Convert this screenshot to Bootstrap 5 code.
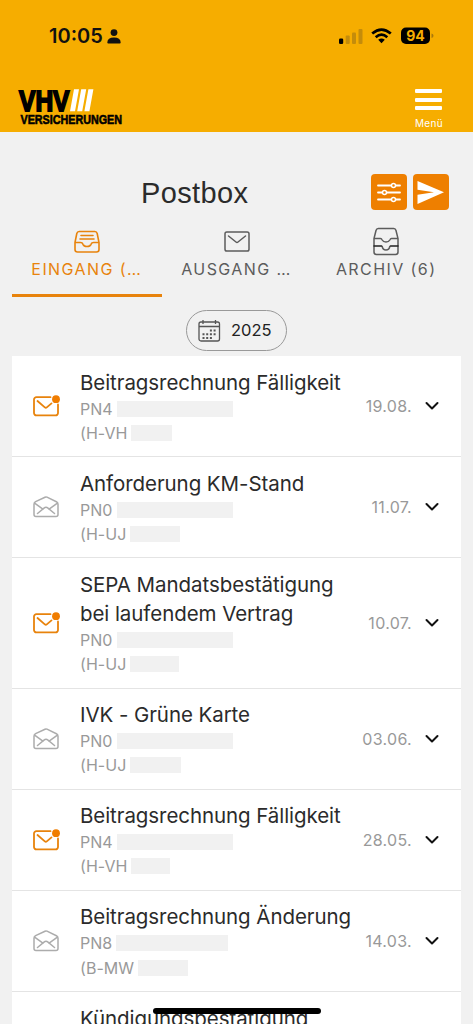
<!DOCTYPE html>
<html lang="de">
<head>
  <meta charset="UTF-8" />
  <meta name="viewport" content="width=device-width, initial-scale=1" />
  <title>Postbox</title>
  <link href="https://cdn.jsdelivr.net/npm/bootstrap@5.3.0/dist/css/bootstrap.min.css" rel="stylesheet" />
  <style>
    body { font-family: Inter, "Liberation Sans", sans-serif; background: #f1f1f1; color: #2b2b2b; height: 1024px; overflow: hidden; }
    svg { display: block; fill: none; flex: none; }
    .top { background: #f6ad00; height: 132px; }
    .status { height: 72px; padding: 0 39px 0 49px; color: #111; }
    .clock { font-size: 20px; font-weight: 600; letter-spacing: 0; line-height: 24px; }
    .brand-row { height: 60px; padding: 14px 30px 0 18px; }
    .menu-label { font-size: 10px; line-height: 12px; letter-spacing: .35px; margin-top: 7px; }
    .menu-bars { width: 27px; height: 21px; margin-top: 3px; }
    .menu-bars span { height: 4px; border-radius: 1px; background: #fff; }
    .title-row { height: 87px; padding: 42px 24px 0 141px; }
    .page-title { font-family: "Liberation Sans", sans-serif; font-size: 29px; font-weight: 400; line-height: 36px; letter-spacing: .35px; margin-top: 1px; }
    .tools { gap: 6px; }
    .tool { width: 36px; height: 36px; border-radius: 4px; background: #ee7f00; }
    .tabs { height: 78px; margin: 0 12px; color: #5c5c5c; }
    .tab { flex: 1 1 0; border-bottom: 3px solid transparent; padding-top: 8px; }
    .tab.on { color: #e8830c; border-color: #e8830c; }
    .tab-text { font-size: 16px; letter-spacing: 1.42px; line-height: 22px; margin-top: 2px; white-space: nowrap; }
    .year-row { height: 59px; padding-top: 13px; }
    .year { width: 101px; height: 41px; border: 1px solid #999; border-radius: 21px; font-size: 16.5px; color: #222; padding-left: 11px; gap: 10px; }
    .mails { margin: 0 12px; background: #fff; }
    .mail { border-bottom: 1px solid #e4e4e4; padding: 11.500px 22px 11.500px 21px; }
    .mail-body { margin-left: 20px; }
    .mail-title { font-size: 20.5px; line-height: 29px; letter-spacing: -.07px; white-space: nowrap; }
    .sub { font-size: 16px; line-height: 24.1px; height: 24.1px; color: #999; letter-spacing: .05px; gap: 4px; }
    .mask { height: 16px; background: #f1f1f1; }
    .date { font-size: 16px; color: #999; letter-spacing: .3px; margin-right: 13px; }
    .home-bar { position: absolute; left: 153px; top: 1008px; width: 168px; height: 6px; border-radius: 3px; background: #000; }
  </style>
</head>
<body>
  <svg width="0" height="0" class="position-absolute">
    <symbol id="mail-new" viewBox="0 0 27 22">
      <path d="M17.500 2.200H3.500A2.400 2.400 0 0 0 1 4.600V18a2.400 2.400 0 0 0 2.500 2.400H22.500A2.400 2.400 0 0 0 25 18V9.500M4.500 6l7.300 6.400q1 .8 2 0l4.700-4" stroke="#e8830c" stroke-width="1.800" stroke-linecap="round" />
      <circle cx="23" cy="4.200" r="3.900" fill="#f07d00" />
    </symbol>
    <symbol id="mail-open" viewBox="0 0 27 22">
      <path d="M1 8.200Q1 6.500 2.600 5.700L12 1.200q1-.5 2 0l9.400 4.500Q25 6.500 25 8.200V18.500a2 2 0 0 1-2 2H3a2 2 0 0 1-2-2ZM1.600 7.200l8.300 6M24.400 7.200l-8.300 6M4.500 17.500l6.500-5.400q2-1.600 4 0l6.500 5.400" stroke="#acacac" stroke-width="1.500" stroke-linecap="round" />
    </symbol>
    <symbol id="chevron" viewBox="0 0 14 10"><path d="M1.500 2l5.500 5.500L12.500 2" stroke="#111" stroke-width="2" stroke-linecap="round" stroke-linejoin="round" /></symbol>
  </svg>

  <header class="top">
    <div class="status d-flex align-items-center">
      <span class="clock">10:05</span>
      <svg class="ms-1" width="14" height="15" viewBox="0 0 14 15"><g fill="#111"><circle cx="7" cy="3.600" r="3.400" /><path d="M.3 13.500Q.5 8.500 7 8.500t6.700 5q0 1-1 1H1.300q-1 0-1-1Z" /></g></svg>
      <svg class="ms-auto" width="24" height="16" viewBox="0 0 24 16">
        <rect x="0" y="10.500" width="4.200" height="5.500" rx="1.200" fill="#000" />
        <g fill="#c48c0b"><rect x="6.700" y="7.500" width="4" height="8.500" rx="1" /><rect x="13" y="4.500" width="4" height="11.500" rx="1" /><rect x="19.500" y="1" width="4" height="15" rx="1" /></g>
      </svg>
      <svg width="21" height="16" viewBox="0 0 21 16" class="ms-2">
        <path d="M1.200 5.600q9.300-8 18.600 0M4.700 9.200q5.800-5 11.600 0" stroke="#000" stroke-width="2.700" />
        <path d="M7.200 11.800q3.300-2.600 6.600 0L10.500 15.300Z" fill="#000" />
      </svg>
      <svg width="34" height="18" viewBox="0 0 34 18" class="ms-2">
        <rect x="1" y=".5" width="29" height="16.500" rx="5" fill="#000" />
        <path d="M31.500 6.500q2 .4 2 2.200t-2 2.200Z" fill="#a9790c" />
        <text x="15.500" y="13.800" text-anchor="middle" font-family="Inter, sans-serif" font-size="14" font-weight="700" fill="#f6ad00">94</text>
      </svg>
    </div>
    <div class="brand-row d-flex justify-content-between">
      <svg width="106" height="44" viewBox="0 0 106 44" overflow="visible">
        <g font-family="Liberation Sans, Arial, sans-serif" font-weight="700" fill="#000" stroke="#000">
          <text x="1" y="24.800" font-size="29.500" stroke-width="1.900" textLength="50.500" lengthAdjust="spacingAndGlyphs">VHV</text>
          <text x="2.500" y="37.700" font-size="13.500" stroke-width=".6" textLength="101.500" lengthAdjust="spacingAndGlyphs">VERSICHERUNGEN</text>
        </g>
        <path d="M56 3.300h5l-4 22h-5ZM63.200 3.300h5l-4 22h-5ZM70.400 3.300h5l-4 22h-5Z" fill="#fff" />
      </svg>
      <div class="d-flex flex-column align-items-center text-white">
        <div class="menu-bars d-flex flex-column justify-content-between"><span></span><span></span><span></span></div>
        <div class="menu-label">Menü</div>
      </div>
    </div>
  </header>

  <div class="title-row d-flex justify-content-between">
    <h1 class="page-title mb-0">Postbox</h1>
    <div class="tools d-flex">
      <div class="tool"><svg width="36" height="36" viewBox="0 0 36 36">
        <path d="M7 11.500h22M7 18.500h22M7 25.500h22" stroke="#fff" stroke-width="1.800" stroke-linecap="round" />
        <g fill="#ee7f00" stroke="#fff" stroke-width="1.500"><circle cx="22.500" cy="11.500" r="2" /><circle cx="13.500" cy="18.500" r="2" /><circle cx="22.500" cy="25.500" r="2" /></g>
      </svg></div>
      <div class="tool"><svg width="36" height="36" viewBox="0 0 36 36"><path d="M4.500 7L31 18.300 4.500 30V20.800L21 18.300 4.500 15.800Z" fill="#fff" /></svg></div>
    </div>
  </div>

  <nav class="tabs d-flex text-center">
    <div class="tab on d-flex flex-column align-items-center">
      <svg width="26" height="29" viewBox="0 0 26 29" stroke="currentColor" stroke-width="1.600" stroke-linecap="round">
        <path d="M1 15.500L2.800 6.500Q3.300 4.500 5.200 4.500H20.800Q22.700 4.500 23.200 6.500L25 15.500V22.500Q25 25 22.500 25H3.500Q1 25 1 22.500ZM1 15.500H6.500Q8.300 15.500 9 17.300 10 19.500 13 19.500T17 17.300Q17.700 15.500 19.500 15.500H25M7 8.500h12M6 12h14" />
      </svg>
      <div class="tab-text">EINGANG (…</div>
    </div>
    <div class="tab d-flex flex-column align-items-center">
      <svg width="26" height="29" viewBox="0 0 26 29" stroke="currentColor" stroke-width="1.500" stroke-linecap="round">
        <rect x="1" y="5" width="24" height="19" rx="1.800" /><path d="M4.500 9l7.500 6q1 .8 2 0l7.500-6" />
      </svg>
      <div class="tab-text">AUSGANG …</div>
    </div>
    <div class="tab d-flex flex-column align-items-center">
      <svg width="26" height="29" viewBox="0 0 26 29" stroke="currentColor" stroke-width="1.500" stroke-linecap="round">
        <path d="M1 11.500L3 3.500Q3.500 1.500 5.300 1.500H20.700Q22.500 1.500 23 3.500L25 11.500V25Q25 27.500 22.500 27.500H3.500Q1 27.500 1 25ZM1 11.500H7.500Q8.500 11.500 9.200 13 10.200 15 13 15T16.800 13Q17.500 11.500 18.500 11.500H25M9.200 19.500Q9.800 23 13 23T16.800 19.500" />
        <path d="M1 19H8.500M17.500 19H25" stroke="#222" />
      </svg>
      <div class="tab-text">ARCHIV (6)</div>
    </div>
  </nav>

  <div class="year-row d-flex justify-content-center">
    <div class="year d-flex align-items-center">
      <svg width="23" height="24" viewBox="0 0 23 24" stroke="#555" stroke-width="1.300">
        <rect x="1" y="3" width="20.500" height="19" rx="2" /><path d="M1 7.500H21.500M5 1v4M17.500 1v4" />
        <path d="M11.900 11.500h6M4.500 15.300h13.500M4.500 19h10" stroke-width="2" stroke-dasharray="2 1.700" />
      </svg>
      <span>2025</span>
    </div>
  </div>

  <main class="mails">
    <div class="mail d-flex align-items-center">
      <svg width="27" height="22"><use href="#mail-new" /></svg>
      <div class="mail-body">
        <div class="mail-title">Beitragsrechnung Fälligkeit</div>
        <div class="sub d-flex align-items-center">PN4<span class="mask" style="width: 116px"></span></div>
        <div class="sub d-flex align-items-center">(H-VH<span class="mask" style="width: 41px"></span></div>
      </div>
      <span class="date ms-auto">19.08.</span>
      <svg width="14" height="10"><use href="#chevron" /></svg>
    </div>
    <div class="mail d-flex align-items-center">
      <svg width="27" height="22"><use href="#mail-open" /></svg>
      <div class="mail-body">
        <div class="mail-title">Anforderung KM-Stand</div>
        <div class="sub d-flex align-items-center">PN0<span class="mask" style="width: 116px"></span></div>
        <div class="sub d-flex align-items-center">(H-UJ<span class="mask" style="width: 50px"></span></div>
      </div>
      <span class="date ms-auto">11.07.</span>
      <svg width="14" height="10"><use href="#chevron" /></svg>
    </div>
    <div class="mail d-flex align-items-center">
      <svg width="27" height="22"><use href="#mail-new" /></svg>
      <div class="mail-body">
        <div class="mail-title">SEPA Mandatsbestätigung<br />bei laufendem Vertrag</div>
        <div class="sub d-flex align-items-center">PN0<span class="mask" style="width: 116px"></span></div>
        <div class="sub d-flex align-items-center">(H-UJ<span class="mask" style="width: 49px"></span></div>
      </div>
      <span class="date ms-auto">10.07.</span>
      <svg width="14" height="10"><use href="#chevron" /></svg>
    </div>
    <div class="mail d-flex align-items-center">
      <svg width="27" height="22"><use href="#mail-open" /></svg>
      <div class="mail-body">
        <div class="mail-title">IVK - Grüne Karte</div>
        <div class="sub d-flex align-items-center">PN0<span class="mask" style="width: 116px"></span></div>
        <div class="sub d-flex align-items-center">(H-UJ<span class="mask" style="width: 51px"></span></div>
      </div>
      <span class="date ms-auto">03.06.</span>
      <svg width="14" height="10"><use href="#chevron" /></svg>
    </div>
    <div class="mail d-flex align-items-center">
      <svg width="27" height="22"><use href="#mail-new" /></svg>
      <div class="mail-body">
        <div class="mail-title">Beitragsrechnung Fälligkeit</div>
        <div class="sub d-flex align-items-center">PN4<span class="mask" style="width: 116px"></span></div>
        <div class="sub d-flex align-items-center">(H-VH<span class="mask" style="width: 39px"></span></div>
      </div>
      <span class="date ms-auto">28.05.</span>
      <svg width="14" height="10"><use href="#chevron" /></svg>
    </div>
    <div class="mail d-flex align-items-center">
      <svg width="27" height="22"><use href="#mail-open" /></svg>
      <div class="mail-body">
        <div class="mail-title">Beitragsrechnung Änderung</div>
        <div class="sub d-flex align-items-center">PN8<span class="mask" style="width: 112px"></span></div>
        <div class="sub d-flex align-items-center">(B-MW<span class="mask" style="width: 50px"></span></div>
      </div>
      <span class="date ms-auto">14.03.</span>
      <svg width="14" height="10"><use href="#chevron" /></svg>
    </div>
    <div class="mail d-flex">
      <svg width="27" height="22"></svg>
      <div class="mail-body">
        <div class="mail-title">Kündigungsbestätigung</div>
      </div>
    </div>
  </main>
  <div class="home-bar"></div>

  <script src="https://cdn.jsdelivr.net/npm/bootstrap@5.3.0/dist/js/bootstrap.bundle.min.js"></script>
</body>
</html>
